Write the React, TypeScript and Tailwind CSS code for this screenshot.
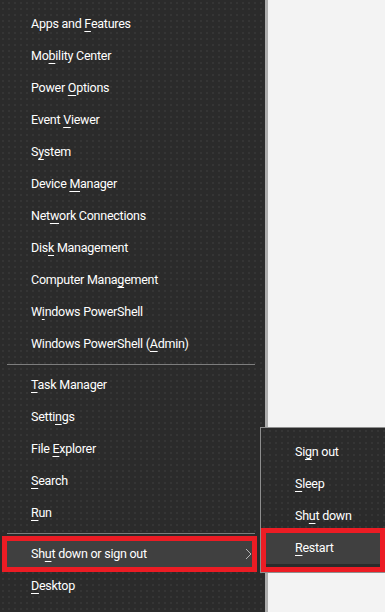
import React from "react";

type Item = { pre: string; key: string; post: string };

const group1: Item[] = [
  { pre: "Apps and ", key: "F", post: "eatures" },
  { pre: "Mo", key: "b", post: "ility Center" },
  { pre: "Power ", key: "O", post: "ptions" },
  { pre: "Event ", key: "V", post: "iewer" },
  { pre: "S", key: "y", post: "stem" },
  { pre: "Device ", key: "M", post: "anager" },
  { pre: "Net", key: "w", post: "ork Connections" },
  { pre: "Dis", key: "k", post: " Management" },
  { pre: "Computer Mana", key: "g", post: "ement" },
  { pre: "W", key: "i", post: "ndows PowerShell" },
  { pre: "Windows PowerShell (", key: "A", post: "dmin)" },
];

const group2: Item[] = [
  { pre: "", key: "T", post: "ask Manager" },
  { pre: "Setti", key: "n", post: "gs" },
  { pre: "File ", key: "E", post: "xplorer" },
  { pre: "", key: "S", post: "earch" },
  { pre: "", key: "R", post: "un" },
];

const sub: Item[] = [
  { pre: "Si", key: "g", post: "n out" },
  { pre: "", key: "S", post: "leep" },
  { pre: "Sh", key: "u", post: "t down" },
  { pre: "", key: "R", post: "estart" },
];

function Label({ it }: { it: Item }) {
  return (
    <span className="whitespace-pre">
      {it.pre}
      <span className="underline decoration-1 underline-offset-[3px]">{it.key}</span>
      {it.post}
    </span>
  );
}

function Row({ it }: { it: Item }) {
  return (
    <div className="h-[32px] flex items-center pl-[31px]">
      <Label it={it} />
    </div>
  );
}

function Sep() {
  return <div className="h-px my-[4px] ml-[7px] mr-[10px] bg-[#7d7d7d]" />;
}

export default function App() {
  return (
    <div className="relative w-[385px] h-[612px] overflow-hidden bg-[#f3f3f3] font-['Roboto','Noto_Sans',sans-serif] text-[12.5px] tracking-[-0.25px] text-white antialiased">
      <div className="w-[268px] h-full bg-[#2b2b2b] bg-[radial-gradient(#353535_1px,transparent_1px)] bg-size-[6px_6px] border-r-[3px] border-[#acacac] pt-[8px]">
        {group1.map((it, i) => (
          <Row key={i} it={it} />
        ))}
        <Sep />
        {group2.map((it, i) => (
          <Row key={i} it={it} />
        ))}
        <Sep />
        <div className="h-[32px] flex items-center pl-[28px] ml-[3px] mr-[9px] bg-[#404040]">
          <Label it={{ pre: "Sh", key: "u", post: "t down or sign out" }} />
          <svg className="ml-auto mr-[4px]" width="7" height="12" viewBox="0 0 7 12">
            <path d="M1 1 L6 6 L1 11" fill="none" stroke="#b5b5b5" strokeWidth="1" />
          </svg>
        </div>
        <Row it={{ pre: "", key: "D", post: "esktop" }} />
      </div>

      <div className="absolute left-[260px] top-[427px] w-[132px] h-[146px] bg-[#2b2b2b] bg-[radial-gradient(#353535_1px,transparent_1px)] bg-size-[6px_6px] border border-[#8e8e8e] pt-[8px]">
        {sub.map((it, i) => (
          <div
            key={i}
            className={
              i === 3
                ? "h-[32px] flex items-center pl-[34px] bg-[#404040]"
                : "h-[32px] flex items-center pl-[34px]"
            }
          >
            <Label it={it} />
          </div>
        ))}
      </div>

      <div className="absolute left-[2px] top-[536px] w-[255px] h-[36px] border-[5px] border-[#ec1c24]" />
      <div className="absolute left-[261px] top-[528px] w-[124px] h-[44px] border-[5px] border-[#ec1c24]" />
    </div>
  );
}
